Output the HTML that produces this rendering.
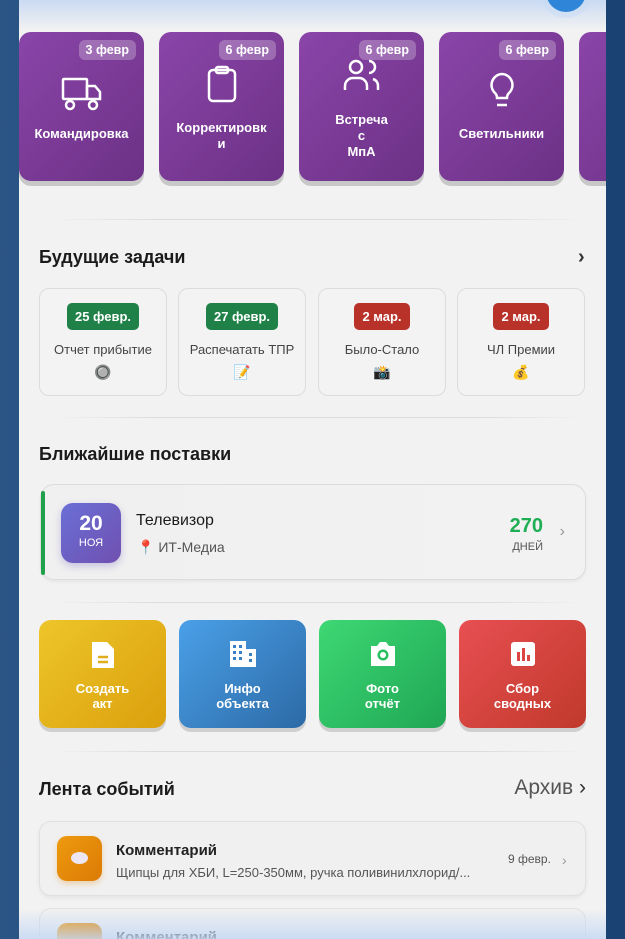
<!DOCTYPE html>
<html><head><meta charset="utf-8"><style>
*{box-sizing:border-box;margin:0;padding:0}
body{width:625px;height:939px;overflow:hidden;font-family:"Liberation Sans","DejaVu Sans",sans-serif;background:linear-gradient(90deg,#2b5585,#1d4678 50%,#1a4374);position:relative}
.panel{position:absolute;left:19px;top:0;width:587px;height:939px;background:#f2f2f2;overflow:hidden}
.topg{position:absolute;left:0;top:0;width:587px;height:30px;background:linear-gradient(#c9daf3,#f2f2f2)}
.botg{position:absolute;left:0;bottom:0;width:587px;height:30px;background:linear-gradient(rgba(242,242,242,0),rgba(197,216,244,.85))}
.fab{position:absolute;left:527px;top:-28px;width:40px;height:40px;border-radius:50%;background:#2f86d8;box-shadow:0 0 0 6px rgba(200,220,245,.5)}
.pc{position:absolute;top:32px;width:125px;height:149px;border-radius:12px;background:linear-gradient(135deg,#8a45a8,#6c3186);box-shadow:0 5px 0 #c8c8c8;color:#fff;text-align:center;font-weight:bold;font-size:13px}
.pc .b{position:absolute;right:8px;top:8px;background:rgba(255,255,255,.25);border-radius:6px;padding:3px 7px;font-size:12.5px}
.pc svg{position:absolute;left:50%;transform:translateX(-50%)}
.pc .t{position:absolute;left:4px;right:4px;line-height:16px}
.sep{position:absolute;left:32px;width:535px;height:1px;background:linear-gradient(90deg,rgba(220,220,220,0),#dcdcdc 20%,#dcdcdc 80%,rgba(220,220,220,0))}
h2{position:absolute;left:20px;font-size:18px;font-weight:bold;color:#1b1b1b}
.tc{position:absolute;top:288px;width:128px;height:108px;border:1px solid #dcdcdc;border-radius:10px;background:#f3f3f3;text-align:center}
.tc .d{display:inline-block;margin-top:14px;color:#fff;font-weight:bold;font-size:13px;padding:6px 8px;border-radius:5px}
.tc .n{font-size:13px;color:#444;margin-top:12px}
.tc .i{font-size:14px;margin-top:7px}
.ab{position:absolute;top:620px;width:127px;height:108px;border-radius:12px;color:#fff;text-align:center;font-weight:bold;font-size:13px;line-height:15px;box-shadow:0 4px 0 #cfcfcf}
.ab svg{position:absolute;left:50%;top:20px;transform:translateX(-50%)}
.ab .t{position:absolute;left:0;right:0;top:61px}
</style></head><body>
<div class="panel">
<div class="topg"></div><div class="fab"></div>

<div class="pc" style="left:0"><div class="b">3 февр</div>
<svg style="top:44px" width="42" height="36" viewBox="0 0 42 36" fill="none" stroke="#fff" stroke-width="2.5"><rect x="2" y="3" width="24" height="20" rx="1"/><path d="M26 10h8l5 6v7H26z"/><circle cx="9" cy="29" r="4"/><circle cx="32" cy="29" r="4"/></svg>
<div class="t" style="top:94px">Командировка</div></div>
<div class="pc" style="left:140px"><div class="b">6 февр</div>
<svg style="top:33px" width="30" height="38" viewBox="0 0 30 38" fill="none" stroke="#fff" stroke-width="2.5"><rect x="2" y="5" width="26" height="31" rx="4"/><rect x="9" y="2" width="12" height="6" rx="2"/></svg>
<div class="t" style="top:88px">Корректировк<br>и</div></div>
<div class="pc" style="left:280px"><div class="b">6 февр</div>
<svg style="top:26px" width="38" height="34" viewBox="0 0 38 34" fill="none" stroke="#fff" stroke-width="2.5"><circle cx="13" cy="9" r="6"/><path d="M2 32v-4a8 8 0 0 1 8-8h6a8 8 0 0 1 8 8v4"/><path d="M26 3a6 6 0 0 1 0 12"/><path d="M30 21a7 7 0 0 1 5 7v4"/></svg>
<div class="t" style="top:80px">Встреча<br>с<br>МпА</div></div>
<div class="pc" style="left:420px"><div class="b">6 февр</div>
<svg style="top:40px" width="28" height="38" viewBox="0 0 28 38" fill="none" stroke="#fff" stroke-width="2.5"><path d="M14 2a11 11 0 0 0-7 19c1.5 1.5 2 3 2 5h10c0-2 .5-3.5 2-5A11 11 0 0 0 14 2z"/><path d="M9 33h10"/></svg>
<div class="t" style="top:94px">Светильники</div></div>
<div class="pc" style="left:560px"></div>

<div class="sep" style="top:219px"></div>
<h2 style="top:247px">Будущие задачи</h2>
<div style="position:absolute;left:559px;top:246px;font-size:20px;color:#333;font-weight:bold">›</div>

<div class="tc" style="left:20px"><div class="d" style="background:#1f8048">25 февр.</div><div class="n">Отчет прибытие</div><div class="i">🔘</div></div>
<div class="tc" style="left:159px"><div class="d" style="background:#1f8048">27 февр.</div><div class="n">Распечатать ТПР</div><div class="i">📝</div></div>
<div class="tc" style="left:299px"><div class="d" style="background:#b8322a">2 мар.</div><div class="n">Было-Стало</div><div class="i">📸</div></div>
<div class="tc" style="left:438px"><div class="d" style="background:#b8322a">2 мар.</div><div class="n">ЧЛ Премии</div><div class="i">💰</div></div>

<div class="sep" style="top:417px"></div>
<h2 style="top:444px">Ближайшие поставки</h2>
<div style="position:absolute;left:21px;top:484px;width:546px;height:96px;border:1px solid #dcdcdc;border-radius:14px;background:linear-gradient(90deg,#f0f0f0,#f2f2f2);box-shadow:0 2px 3px rgba(0,0,0,.05)">
<div style="position:absolute;left:0;top:6px;width:4px;height:84px;background:#1fa14c;border-radius:2px"></div>
<div style="position:absolute;left:20px;top:18px;width:60px;height:60px;border-radius:12px;background:linear-gradient(135deg,#6a6fd6,#7050b0);color:#fff;text-align:center;box-shadow:0 3px 8px rgba(100,80,180,.3)"><div style="font-size:21px;font-weight:bold;margin-top:9px">20</div><div style="font-size:11px;margin-top:1px">НОЯ</div></div>
<div style="position:absolute;left:95px;top:27px;font-size:16px;color:#1b1b1b">Телевизор</div>
<div style="position:absolute;left:96px;top:54px;font-size:14px;color:#555"><span style="color:#d23">📍</span> ИТ-Медиа</div>
<div style="position:absolute;right:42px;top:30px;font-size:20px;font-weight:bold;color:#1fae55">270</div>
<div style="position:absolute;right:42px;top:56px;font-size:11px;color:#555">ДНЕЙ</div>
<div style="position:absolute;right:20px;top:38px;font-size:16px;color:#999">›</div>
</div>

<div class="sep" style="top:602px"></div>
<div class="ab" style="left:20px;background:linear-gradient(135deg,#edc52a,#dba00d)">
<svg width="26" height="30" viewBox="0 0 26 30"><path d="M2 2h15l7 7v19H2z" fill="#fff"/><path d="M8 17h10M8 22h10" stroke="#e0ae1c" stroke-width="2.5"/></svg><div class="t">Создать<br>акт</div></div>
<div class="ab" style="left:160px;background:linear-gradient(135deg,#4aa0e8,#2c6aa6)">
<svg width="28" height="28" viewBox="0 0 28 28"><path d="M1 1h16v8h10v18H1z" fill="#fff"/><g fill="#3a80c4"><rect x="4" y="5" width="3" height="3"/><rect x="10" y="5" width="3" height="3"/><rect x="4" y="11" width="3" height="3"/><rect x="10" y="11" width="3" height="3"/><rect x="4" y="17" width="3" height="3"/><rect x="10" y="17" width="3" height="3"/><rect x="20" y="13" width="3" height="3"/><rect x="20" y="19" width="3" height="3"/></g></svg><div class="t">Инфо<br>объекта</div></div>
<div class="ab" style="left:300px;background:linear-gradient(135deg,#3ed874,#1fa654)">
<svg width="30" height="28" viewBox="0 0 30 28"><path d="M3 6h6l3-4h6l3 4h6v20H3z" fill="#fff"/><circle cx="15" cy="15" r="5.5" fill="#2bbf63"/><circle cx="15" cy="15" r="3" fill="#fff"/></svg><div class="t">Фото<br>отчёт</div></div>
<div class="ab" style="left:440px;background:linear-gradient(135deg,#e84f52,#c0392b)">
<svg width="28" height="28" viewBox="0 0 28 28"><rect x="2" y="2" width="24" height="24" rx="3" fill="#fff"/><g fill="#d44"><rect x="8" y="12" width="3" height="9"/><rect x="13" y="8" width="3" height="13"/><rect x="18" y="15" width="3" height="6"/></g></svg><div class="t">Сбор<br>сводных</div></div>

<div class="sep" style="top:751px"></div>
<h2 style="top:779px">Лента событий</h2>
<div style="position:absolute;right:20px;top:776px;font-size:21px;color:#555">Архив <span style="color:#333">›</span></div>

<div style="position:absolute;left:20px;top:821px;width:547px;height:75px;border:1px solid #e0e0e0;border-radius:12px;background:#f0f0f0;box-shadow:0 2px 4px rgba(0,0,0,.06)">
<div style="position:absolute;left:17px;top:14px;width:45px;height:45px;border-radius:10px;background:linear-gradient(135deg,#ee9a0e,#db7a05);box-shadow:0 3px 6px rgba(230,140,20,.3)"><div style="position:absolute;left:14px;top:16px;width:17px;height:12px;border-radius:50%;background:#ece6f5"></div></div>
<div style="position:absolute;left:76px;top:20px;font-size:15px;color:#222;font-weight:bold">Комментарий</div>
<div style="position:absolute;left:76px;top:43px;font-size:13px;color:#555">Щипцы для ХБИ, L=250-350мм, ручка поливинилхлорид/...</div>
<div style="position:absolute;left:468px;top:30px;font-size:12px;color:#555">9 февр.</div>
<div style="position:absolute;left:522px;top:30px;font-size:14px;color:#999">›</div>
</div>
<div style="position:absolute;left:20px;top:908px;width:547px;height:75px;border:1px solid #e0e0e0;border-radius:12px;background:#f0f0f0">
<div style="position:absolute;left:17px;top:14px;width:45px;height:45px;border-radius:10px;background:linear-gradient(135deg,#ee9a0e,#db7a05)"></div>
<div style="position:absolute;left:76px;top:20px;font-size:15px;color:#222;font-weight:bold">Комментарий</div>
</div>
<div class="botg"></div>
</div>
</body></html>
